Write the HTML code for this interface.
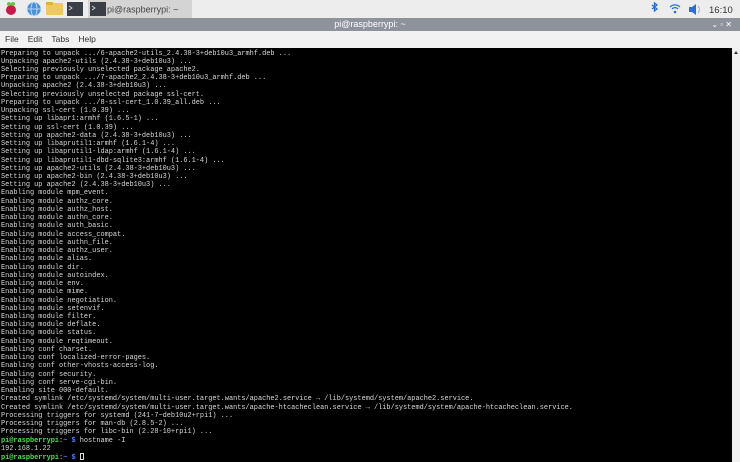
<!DOCTYPE html>
<html><head><meta charset="utf-8"><style>
*{margin:0;padding:0;box-sizing:border-box}
body{width:740px;height:462px;overflow:hidden;background:#000;font-family:"Liberation Sans",sans-serif;position:relative}
#panel{position:absolute;left:0;top:0;width:740px;height:18px;background:#ededed}
#title{position:absolute;left:0;top:18px;width:740px;height:13px;background:#8e929a;color:#fff;font-size:9px;text-align:center;line-height:13px}
#menu{position:absolute;left:0;top:31px;width:740px;height:17px;background:#f2f2f2;font-size:8.5px;color:#333;line-height:17px}
#menu span{margin-left:5px;margin-right:4px}
#term{position:absolute;left:0;top:48px;width:732px;height:414px;background:#000;font-family:"Liberation Mono",monospace;font-size:6.92px;line-height:8.24px;color:#d8d8d8;white-space:pre;padding-left:1px;padding-top:1.5px}
#sb{position:absolute;left:732px;top:48px;width:8px;height:414px;background:#f0f0f0}
.g{color:#4ee24e;font-weight:bold}.b{color:#5b7cff;font-weight:bold}
.cur{display:inline-block;width:4px;height:7px;border:1px solid #ddd;vertical-align:-1px}
</style></head><body>
<div id="panel">
<svg width="740" height="18" style="position:absolute;left:0;top:0">
<circle cx="11" cy="10" r="5" fill="#c51a4a"/><circle cx="9" cy="4" r="2" fill="#6cc04a"/><circle cx="13" cy="4" r="2" fill="#6cc04a"/>
<circle cx="34" cy="9" r="7" fill="#4a90d9"/><circle cx="34" cy="9" r="7" fill="none" stroke="#cfe3f7" stroke-width="0.8"/><line x1="27" y1="9" x2="41" y2="9" stroke="#cfe3f7" stroke-width=".8"/><ellipse cx="34" cy="9" rx="3" ry="7" fill="none" stroke="#cfe3f7" stroke-width=".8"/>
<rect x="46" y="3" width="17" height="12" rx="1" fill="#f0c860"/><rect x="46" y="2" width="7" height="3" fill="#e0b040"/>
<rect x="67" y="2" width="16" height="14" fill="#3a3f47"/><path d="M69 6l3 2-3 2" stroke="#ddd" fill="none" stroke-width=".8"/>
<rect x="88" y="0" width="104" height="18" fill="#d4d4d4"/>
<rect x="90" y="2" width="16" height="14" fill="#3a3f47"/><path d="M92 6l3 2-3 2" stroke="#ddd" fill="none" stroke-width=".8"/>
<text x="107" y="12.5" font-size="9" fill="#444" font-family="Liberation Sans">pi@raspberrypi: ~</text>
<path d="M652 5l5 4-2.5 2V3l2.5 2-5 4" stroke="#2a6fd6" fill="none" stroke-width="1.3"/>
<path d="M670 7a7 7 0 0 1 10 0M672 9a4 4 0 0 1 6 0" stroke="#2a6fd6" fill="none" stroke-width="1.2"/><circle cx="675" cy="12" r="1.3" fill="#2a6fd6"/>
<path d="M689 7h3l4-3v11l-4-3h-3z" fill="#2a6fd6"/><path d="M698 6a5 5 0 0 1 0 7" stroke="#8fb8ee" fill="none"/>
<text x="709" y="13" font-size="9.5" fill="#333" font-family="Liberation Sans">16:10</text>
</svg></div>
<div id="title">pi@raspberrypi: ~<span style="position:absolute;right:8px;top:0;font-size:8px">⌄ ▫ ✕</span></div>
<div id="menu"><span>File</span><span>Edit</span><span>Tabs</span><span>Help</span></div>
<div id="term">Preparing to unpack .../6-apache2-utils_2.4.38-3+deb10u3_armhf.deb ...
Unpacking apache2-utils (2.4.38-3+deb10u3) ...
Selecting previously unselected package apache2.
Preparing to unpack .../7-apache2_2.4.38-3+deb10u3_armhf.deb ...
Unpacking apache2 (2.4.38-3+deb10u3) ...
Selecting previously unselected package ssl-cert.
Preparing to unpack .../8-ssl-cert_1.0.39_all.deb ...
Unpacking ssl-cert (1.0.39) ...
Setting up libapr1:armhf (1.6.5-1) ...
Setting up ssl-cert (1.0.39) ...
Setting up apache2-data (2.4.38-3+deb10u3) ...
Setting up libaprutil1:armhf (1.6.1-4) ...
Setting up libaprutil1-ldap:armhf (1.6.1-4) ...
Setting up libaprutil1-dbd-sqlite3:armhf (1.6.1-4) ...
Setting up apache2-utils (2.4.38-3+deb10u3) ...
Setting up apache2-bin (2.4.38-3+deb10u3) ...
Setting up apache2 (2.4.38-3+deb10u3) ...
Enabling module mpm_event.
Enabling module authz_core.
Enabling module authz_host.
Enabling module authn_core.
Enabling module auth_basic.
Enabling module access_compat.
Enabling module authn_file.
Enabling module authz_user.
Enabling module alias.
Enabling module dir.
Enabling module autoindex.
Enabling module env.
Enabling module mime.
Enabling module negotiation.
Enabling module setenvif.
Enabling module filter.
Enabling module deflate.
Enabling module status.
Enabling module reqtimeout.
Enabling conf charset.
Enabling conf localized-error-pages.
Enabling conf other-vhosts-access-log.
Enabling conf security.
Enabling conf serve-cgi-bin.
Enabling site 000-default.
Created symlink /etc/systemd/system/multi-user.target.wants/apache2.service → /lib/systemd/system/apache2.service.
Created symlink /etc/systemd/system/multi-user.target.wants/apache-htcacheclean.service → /lib/systemd/system/apache-htcacheclean.service.
Processing triggers for systemd (241-7~deb10u2+rpi1) ...
Processing triggers for man-db (2.8.5-2) ...
Processing triggers for libc-bin (2.28-10+rpi1) ...
<span class="g">pi@raspberrypi</span>:<span class="b">~ $</span> hostname -I
192.168.1.22
<span class="g">pi@raspberrypi</span>:<span class="b">~ $</span> <span class="cur"></span></div>
<div id="sb"><div style="margin:3px auto 0;width:0;height:0;border-left:2px solid transparent;border-right:2px solid transparent;border-bottom:3px solid #333"></div></div>
</body></html>
